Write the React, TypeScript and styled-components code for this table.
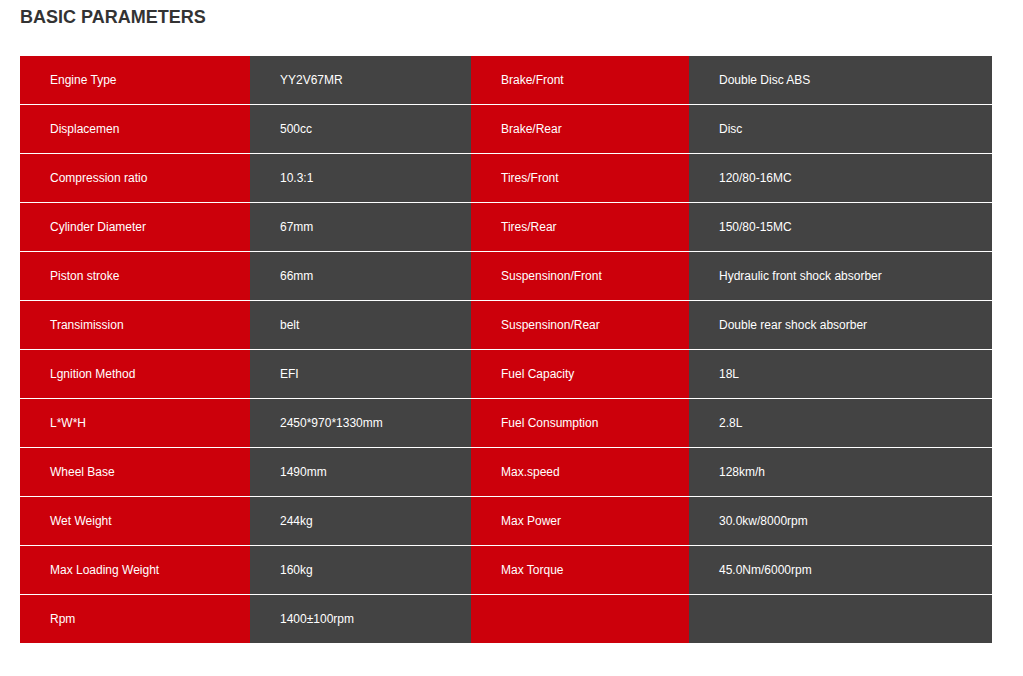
import React from "react";
import styled, { createGlobalStyle } from "styled-components";

const Global = createGlobalStyle`
  html, body { margin: 0; padding: 0; background: #fff; }
  body { font-family: "Liberation Sans", Arial, sans-serif; }
`;

const Page = styled.div`
  padding: 7px 31px 0 20px;
`;

const Title = styled.h2`
  margin: 0;
  font-size: 18px;
  line-height: 21px;
  font-weight: 700;
  color: #333;
`;

const Table = styled.div`
  margin-top: 28px;
  display: flex;
  flex-direction: column;
  width: 972px;
`;

const Row = styled.div<{ $last?: boolean }>`
  display: grid;
  grid-template-columns: 230px 221px 218px 303px;
  height: 48px;
  border-bottom: ${(p) => (p.$last ? "none" : "1px solid #fff")};
`;

const Cell = styled.div<{ $label?: boolean }>`
  display: flex;
  align-items: center;
  padding-left: 30px;
  background: ${(p) => (p.$label ? "#cc000b" : "#434343")};
  color: #fff;
  font-size: 12px;
`;

const rows: [string, string, string, string][] = [
  ["Engine Type", "YY2V67MR", "Brake/Front", "Double Disc ABS"],
  ["Displacemen", "500cc", "Brake/Rear", "Disc"],
  ["Compression ratio", "10.3:1", "Tires/Front", "120/80-16MC"],
  ["Cylinder Diameter", "67mm", "Tires/Rear", "150/80-15MC"],
  ["Piston stroke", "66mm", "Suspensinon/Front", "Hydraulic front shock absorber"],
  ["Transimission", "belt", "Suspensinon/Rear", "Double rear shock absorber"],
  ["Lgnition Method", "EFI", "Fuel Capacity", "18L"],
  ["L*W*H", "2450*970*1330mm", "Fuel Consumption", "2.8L"],
  ["Wheel Base", "1490mm", "Max.speed", "128km/h"],
  ["Wet Weight", "244kg", "Max Power", "30.0kw/8000rpm"],
  ["Max Loading Weight", "160kg", "Max Torque", "45.0Nm/6000rpm"],
  ["Rpm", "1400±100rpm", "", ""],
];

export default function App() {
  return (
    <>
      <Global />
      <Page>
        <Title>BASIC PARAMETERS</Title>
        <Table>
          {rows.map((r, i) => (
            <Row key={i} $last={i === rows.length - 1}>
              <Cell $label>{r[0]}</Cell>
              <Cell>{r[1]}</Cell>
              <Cell $label>{r[2]}</Cell>
              <Cell>{r[3]}</Cell>
            </Row>
          ))}
        </Table>
      </Page>
    </>
  );
}
